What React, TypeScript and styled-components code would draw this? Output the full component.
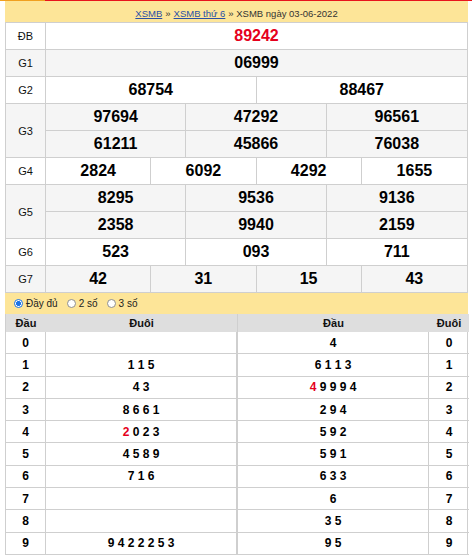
import React from "react";
import styled, { createGlobalStyle } from "styled-components";

const GlobalStyle = createGlobalStyle`
  html, body { margin: 0; padding: 0; background: #fff; }
  body { font-family: "Liberation Sans", Arial, sans-serif; color: #000; }
  * { box-sizing: border-box; }
`;

const BORDER = "#cfcfcf";

const TopLine = styled.div`
  height: 1px;
  background: linear-gradient(to right, #f0a020 0, #f0a020 45px, #e8141c 45px, #e8141c 100%);
`;

const Board = styled.div`
  margin-left: 5px;
  width: 463px;
`;

const Crumbs = styled.div`
  height: 21px;
  background: #fde598;
  font-size: 9.5px;
  color: #333;
  display: flex;
  align-items: center;
  justify-content: center;
  padding-top: 3px;
  gap: 3px;
`;

const CrumbLink = styled.a`
  color: #2a4fa6;
  text-decoration: underline;
`;

const Prizes = styled.div`
  border: 1px solid ${BORDER};
  border-bottom: none;
`;

const PrizeRow = styled.div<{ $alt?: boolean }>`
  display: flex;
  border-bottom: 1px solid ${BORDER};
  background: ${(p) => (p.$alt ? "#f5f5f5" : "#fff")};
`;

const Label = styled.div`
  width: 40px;
  flex: none;
  border-right: 1px solid ${BORDER};
  display: flex;
  align-items: center;
  justify-content: center;
  font-size: 11px;
  color: #111;
`;

const Cells = styled.div<{ $cols: number }>`
  flex: 1;
  display: grid;
  grid-template-columns: repeat(${(p) => p.$cols}, 1fr);
`;

const Num = styled.div<{ $cols: number; $red?: boolean }>`
  height: 26px;
  display: flex;
  align-items: center;
  justify-content: center;
  font-size: 16px;
  font-weight: bold;
  color: ${(p) => (p.$red ? "#e5001c" : "#000")};
  border-right: 1px solid ${BORDER};
  &:nth-child(${(p) => p.$cols}n) { border-right: none; }
  &:nth-child(n + ${(p) => p.$cols + 1}) {
    border-top: 1px solid ${BORDER};
    height: 27px;
  }
`;

const Options = styled.div`
  height: 21px;
  background: #fde598;
  display: flex;
  align-items: center;
  padding-left: 9px;
  gap: 9px;
  font-size: 10px;
  color: #222;
`;

const Option = styled.label`
  display: flex;
  align-items: center;
  gap: 3px;
`;

const Radio = styled.span<{ $on?: boolean }>`
  width: 9px;
  height: 9px;
  border-radius: 50%;
  border: 1px solid ${(p) => (p.$on ? "#1a73e8" : "#8f8f8f")};
  background: ${(p) =>
    p.$on ? "radial-gradient(circle, #1a73e8 0 2.2px, #fff 2.6px)" : "#fff"};
`;

const Loto = styled.div`
  display: grid;
  grid-template-columns: 40px 192px 191px 40px;
  grid-template-rows: 18px;
  grid-auto-rows: 22.3px;
  border-left: 1px solid ${BORDER};
  border-right: 1px solid ${BORDER};
`;

const Head = styled.div`
  background: #dedede;
  display: flex;
  align-items: center;
  justify-content: center;
  font-size: 11px;
  font-weight: bold;
  color: #111;
  &:nth-child(2) { border-right: 1px solid ${BORDER}; }
`;

const Cell = styled.div<{ $divide?: boolean; $line?: boolean }>`
  display: flex;
  align-items: center;
  justify-content: center;
  font-size: 12px;
  font-weight: bold;
  white-space: pre;
  border-bottom: 1px solid ${BORDER};
  border-right: ${(p) =>
    p.$divide ? `2px solid ${BORDER}` : p.$line ? `1px solid ${BORDER}` : "none"};
`;

const Red = styled.span`
  color: #e5001c;
`;

type Prize = { label: string; cols: number; nums: string[]; red?: boolean };

const prizes: Prize[] = [
  { label: "ĐB", cols: 1, nums: ["89242"], red: true },
  { label: "G1", cols: 1, nums: ["06999"] },
  { label: "G2", cols: 2, nums: ["68754", "88467"] },
  { label: "G3", cols: 3, nums: ["97694", "47292", "96561", "61211", "45866", "76038"] },
  { label: "G4", cols: 4, nums: ["2824", "6092", "4292", "1655"] },
  { label: "G5", cols: 3, nums: ["8295", "9536", "9136", "2358", "9940", "2159"] },
  { label: "G6", cols: 3, nums: ["523", "093", "711"] },
  { label: "G7", cols: 4, nums: ["42", "31", "15", "43"] },
];

const duoi = ["", "115", "43", "8661", "2023", "4589", "716", "", "", "9422253"];
const dau = ["4", "6113", "49994", "294", "592", "591", "633", "6", "35", "95"];

const spaced = (s: string) => s.split("").join(" ");

const Digits: React.FC<{ s: string; redFirst?: boolean }> = ({ s, redFirst }) => {
  if (!redFirst || !s) return <>{spaced(s)}</>;
  return (
    <>
      <Red>{s[0]}</Red>
      {" " + spaced(s.slice(1))}
    </>
  );
};

export default function App() {
  return (
    <>
      <GlobalStyle />
      <TopLine />
      <Board>
        <Crumbs>
          <CrumbLink href="#">XSMB</CrumbLink>
          <span>»</span>
          <CrumbLink href="#">XSMB thứ 6</CrumbLink>
          <span>» XSMB ngày 03-06-2022</span>
        </Crumbs>
        <Prizes>
          {prizes.map((p, i) => (
            <PrizeRow key={p.label} $alt={i % 2 === 1}>
              <Label>{p.label}</Label>
              <Cells $cols={p.cols}>
                {p.nums.map((n, j) => (
                  <Num key={j} $cols={p.cols} $red={p.red}>
                    {n}
                  </Num>
                ))}
              </Cells>
            </PrizeRow>
          ))}
        </Prizes>
        <Options>
          <Option>
            <Radio $on />
            Đầy đủ
          </Option>
          <Option>
            <Radio />2 số
          </Option>
          <Option>
            <Radio />3 số
          </Option>
        </Options>
        <Loto>
          <Head>Đầu</Head>
          <Head>Đuôi</Head>
          <Head>Đầu</Head>
          <Head>Đuôi</Head>
          {duoi.map((d, i) => (
            <React.Fragment key={i}>
              <Cell $line>{i}</Cell>
              <Cell $divide>
                <Digits s={d} redFirst={i === 4} />
              </Cell>
              <Cell $line>
                <Digits s={dau[i]} redFirst={i === 2} />
              </Cell>
              <Cell>{i}</Cell>
            </React.Fragment>
          ))}
        </Loto>
      </Board>
    </>
  );
}
